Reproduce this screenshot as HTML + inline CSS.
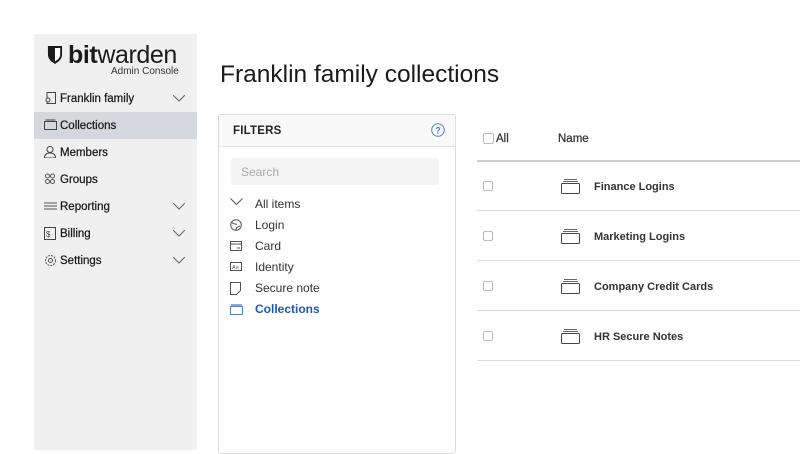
<!DOCTYPE html>
<html><head><meta charset="utf-8"><style>
*{margin:0;padding:0;box-sizing:border-box}
body{width:800px;height:450px;background:#fff;font-family:"Liberation Sans",sans-serif;position:relative;overflow:hidden;color:#222}
.side{position:absolute;left:34px;top:34px;width:163px;height:416px;background:#f0f0f0}
.logo{position:absolute;left:13px;top:7px;font-size:25px;color:#1b1b1b;letter-spacing:-0.4px}
.logo b{font-weight:700}
.logo span{font-weight:300}
.sub{position:absolute;left:77px;top:32px;font-size:10px;color:#333}
.nav{position:absolute;left:0;width:163px;height:27px;font-size:11.5px;color:#1a1a1a;padding-left:26px;line-height:28px;-webkit-text-stroke:0.25px #1a1a1a}
.nav.act{background:#d4d8dd}
.nav svg.i{position:absolute;left:10px;top:7px}
.nav svg.c{position:absolute;left:139px;top:10px}
h1{position:absolute;left:220px;top:61px;font-size:24.5px;font-weight:400;color:#1a1a1a}
.fp{position:absolute;left:218px;top:114px;width:238px;height:340px;border:1px solid #ddd;border-radius:3px}
.fh{height:32px;background:#f9f9f9;border-bottom:1px solid #e4e4e4;font-size:11.5px;font-weight:700;padding:10px 14px;letter-spacing:.2px}
.srch{position:absolute;left:12px;top:43px;width:208px;height:27px;background:#f4f4f4;border-radius:3px;font-size:12px;color:#aaa;padding:7px 10px}
.fi{position:absolute;left:36px;font-size:12px;color:#333}
.fi svg{position:absolute;left:-25px;top:1px}
.th{position:absolute;font-size:11.5px;color:#333;-webkit-text-stroke:0.25px #333}
.cb{position:absolute;width:10px;height:10px;border:1px solid #bbb;border-radius:2px}
.ln{position:absolute;left:477px;width:323px;height:1px;background:#ddd}
.rn{position:absolute;left:594px;font-size:11px;font-weight:700;color:#333}
.ri{position:absolute;left:561px}
</style></head><body>
<div class="side">
<div class="logo"><svg width="16" height="20" viewBox="0 0 17 21" style="vertical-align:-2px;margin-right:5px"><path d="M1 1h15v9c0 5-4 8-7.5 10C5 18 1 15 1 10z" fill="#1b1b1b"/><path d="M8.5 3h5.5v7c0 3.5-2.7 5.8-5.5 7.3z" fill="#fff"/></svg><b>bit</b><span>warden</span></div>
<div class="sub">Admin Console</div>
<div class="nav" style="top:51px"><svg class="i" width="12" height="13"><rect x="3" y=".5" width="8.5" height="11" fill="none" stroke="#444"/><circle cx="4" cy="8" r="2" fill="#f0f0f0" stroke="#444"/></svg>Franklin family<svg class="c" width="12" height="7"><path d="M0 0l6 6 6-6" fill="none" stroke="#666"/></svg></div>
<div class="nav act" style="top:78px"><svg class="i" width="13" height="12"><rect x=".5" y="2.5" width="12" height="8" fill="none" stroke="#444"/><path d="M1.5 1h10" stroke="#444"/></svg>Collections</div>
<div class="nav" style="top:105px"><svg class="i" width="12" height="12"><circle cx="6" cy="3.5" r="3" fill="none" stroke="#444"/><path d="M.5 12c0-4 2.5-5 5.5-5s5.5 1 5.5 5z" fill="none" stroke="#444"/></svg>Members</div>
<div class="nav" style="top:132px"><svg class="i" width="12" height="12"><circle cx="3.5" cy="3" r="2" fill="none" stroke="#555"/><circle cx="8.5" cy="3" r="2" fill="none" stroke="#555"/><circle cx="3.5" cy="8.5" r="2" fill="none" stroke="#555"/><circle cx="8.5" cy="8.5" r="2" fill="none" stroke="#555"/></svg>Groups</div>
<div class="nav" style="top:159px"><svg class="i" width="13" height="12"><path d="M0 3h13M0 6h13M0 9h13" stroke="#555"/></svg>Reporting<svg class="c" width="12" height="7"><path d="M0 0l6 6 6-6" fill="none" stroke="#666"/></svg></div>
<div class="nav" style="top:186px"><svg class="i" width="12" height="13"><rect x=".5" y=".5" width="11" height="12" fill="none" stroke="#444"/><text x="2" y="10" font-size="8" fill="#444">$</text></svg>Billing<svg class="c" width="12" height="7"><path d="M0 0l6 6 6-6" fill="none" stroke="#666"/></svg></div>
<div class="nav" style="top:213px"><svg class="i" width="13" height="13"><circle cx="6.5" cy="6.5" r="5" fill="none" stroke="#555" stroke-dasharray="2 1"/><circle cx="6.5" cy="6.5" r="2" fill="none" stroke="#555"/></svg>Settings<svg class="c" width="12" height="7"><path d="M0 0l6 6 6-6" fill="none" stroke="#666"/></svg></div>
</div>
<h1>Franklin family collections</h1>
<div class="fp">
<div class="fh">FILTERS<svg width="14" height="14" style="position:absolute;left:212px;top:8px"><circle cx="7" cy="7" r="6.3" fill="none" stroke="#5a7fc7"/><text x="4.2" y="10.5" font-size="9" fill="#5a7fc7">?</text></svg></div>
<div class="srch">Search</div>
<div class="fi" style="top:82px"><svg width="13" height="8"><path d="M.5.5l6 6 6-6" fill="none" stroke="#555"/></svg>All items</div>
<div class="fi" style="top:103px"><svg width="12" height="12"><circle cx="6" cy="6" r="5.3" fill="none" stroke="#555"/><path d="M2 4c2 0 3 2 5 1M6 11c0-3 2-3 4-4" fill="none" stroke="#555"/></svg>Login</div>
<div class="fi" style="top:124px"><svg width="12" height="10" style="top:2px"><rect x=".5" y=".5" width="11" height="9" fill="none" stroke="#555"/><path d="M1 3h10M7 7h3" stroke="#555"/></svg>Card</div>
<div class="fi" style="top:145px"><svg width="12" height="10" style="top:2px"><rect x=".5" y=".5" width="11" height="8" fill="none" stroke="#555"/><text x="2" y="7" font-size="5.5" fill="#555">A≡</text></svg>Identity</div>
<div class="fi" style="top:166px"><svg width="11" height="13"><path d="M.5.5h10v8l-4 4h-6z" fill="none" stroke="#555"/></svg>Secure note</div>
<div class="fi" style="top:187px;color:#1f57b4;font-weight:700"><svg width="13" height="12"><rect x=".5" y="3.5" width="12" height="8" fill="none" stroke="#5a7fc7"/><rect x="1" y="1" width="11" height="2" fill="#8aa6dc"/></svg>Collections</div>
</div>
<div class="cb" style="left:483px;top:133px;width:11px;height:11px"></div>
<div class="th" style="left:496px;top:133px">All</div>
<div class="th" style="left:558px;top:133px">Name</div>
<div class="ln" style="top:160px;height:2px;background:#ccc"></div>
<div class="ln" style="top:210px"></div><div class="ln" style="top:260px"></div><div class="ln" style="top:310px"></div><div class="ln" style="top:360px"></div>
<div class="cb" style="left:483px;top:181px"></div><div class="cb" style="left:483px;top:231px"></div><div class="cb" style="left:483px;top:281px"></div><div class="cb" style="left:483px;top:331px"></div>
<svg class="ri" style="top:179px" width="19" height="15"><path d="M3 .5h13M2 2.5h15" stroke="#666"/><rect x=".5" y="4.5" width="18" height="10" rx="1" fill="none" stroke="#444"/></svg>
<svg class="ri" style="top:229px" width="19" height="15"><path d="M3 .5h13M2 2.5h15" stroke="#666"/><rect x=".5" y="4.5" width="18" height="10" rx="1" fill="none" stroke="#444"/></svg>
<svg class="ri" style="top:279px" width="19" height="15"><path d="M3 .5h13M2 2.5h15" stroke="#666"/><rect x=".5" y="4.5" width="18" height="10" rx="1" fill="none" stroke="#444"/></svg>
<svg class="ri" style="top:329px" width="19" height="15"><path d="M3 .5h13M2 2.5h15" stroke="#666"/><rect x=".5" y="4.5" width="18" height="10" rx="1" fill="none" stroke="#444"/></svg>
<div class="rn" style="top:181px">Finance Logins</div>
<div class="rn" style="top:231px">Marketing Logins</div>
<div class="rn" style="top:281px">Company Credit Cards</div>
<div class="rn" style="top:331px">HR Secure Notes</div>
</body></html>
